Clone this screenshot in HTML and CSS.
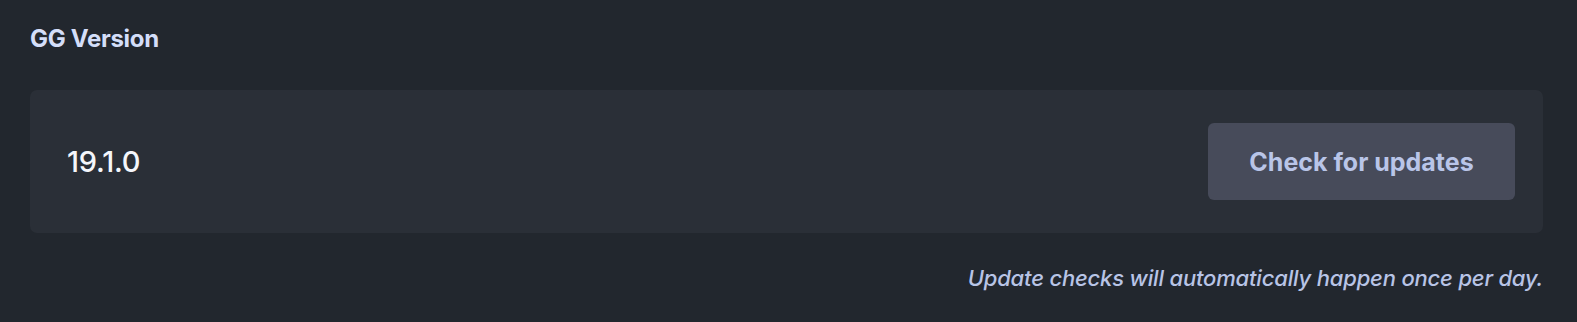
FILE: index.html
```html
<!DOCTYPE html>
<html lang="en">
<head>
<meta charset="utf-8">
<title>GG Version</title>
<link rel="stylesheet" href="styles.css">
</head>
<body>
<main class="page">
  <h2 class="section-title">GG Version</h2>
  <div class="version-card">
    <span class="version-number">19.1.0</span>
    <button class="update-button" type="button">Check for updates</button>
  </div>
  <p class="update-note">Update checks will automatically happen once per day.</p>
</main>
</body>
</html>
```

FILE: styles.css
```css
html, body {
  margin: 0;
  padding: 0;
  background: #22272e;
}
body {
  font-family: Inter, "Noto Sans", "Liberation Sans", sans-serif;
  width: 1577px;
  height: 322px;
  overflow: hidden;
}
.page {
  padding: 24px 34px 0 30px;
}
.section-title {
  margin: 0;
  font-size: 24px;
  font-weight: 700;
  line-height: 30px;
  color: #d4def9;
  letter-spacing: -0.3px;
}
.version-card {
  margin-top: 36px;
  background: #2a2f37;
  border-radius: 7px;
  height: 143px;
  box-sizing: border-box;
  padding: 0 28px 0 37px;
  display: flex;
  align-items: center;
  justify-content: space-between;
}
.version-number {
  font-size: 29px;
  font-weight: 500;
  color: #f4f6fb;
  letter-spacing: -0.2px;
}
.update-button {
  width: 307px;
  height: 77px;
  border: none;
  border-radius: 6px;
  background: #474b5a;
  color: #b9c5e8;
  font-family: inherit;
  font-size: 25px;
  font-weight: 700;
  cursor: pointer;
}
.update-note {
  margin: 32px 0 0;
  text-align: right;
  font-style: italic;
  font-size: 22px;
  font-weight: 500;
  color: #b8c4e6;
  letter-spacing: -0.18px;
}
```
